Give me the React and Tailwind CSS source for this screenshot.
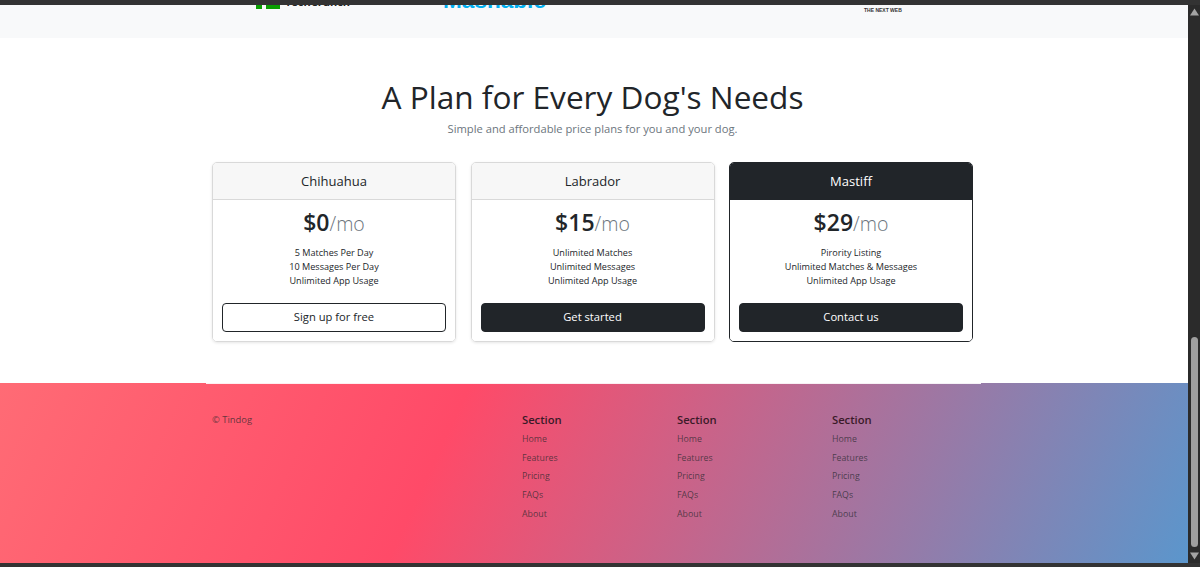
import React from 'react';

const plans = [
  { name: 'Chihuahua', price: '$0', lines: ['5 Matches Per Day', '10 Messages Per Day', 'Unlimited App Usage'], cta: 'Sign up for free', outline: true },
  { name: 'Labrador', price: '$15', lines: ['Unlimited Matches', 'Unlimited Messages', 'Unlimited App Usage'], cta: 'Get started' },
  { name: 'Mastiff', price: '$29', lines: ['Pirority Listing', 'Unlimited Matches & Messages', 'Unlimited App Usage'], cta: 'Contact us', dark: true },
];

const links = ['Home', 'Features', 'Pricing', 'FAQs', 'About'];

const PlanCard = ({ plan }) => (
  <div className={`w-[244px] h-[180px] flex flex-col rounded-[5px] overflow-hidden border ${plan.dark ? 'border-[#212529]' : 'border-[#d9d9d9] shadow-[0_1px_3px_rgba(0,0,0,0.1)]'}`}>
    <div className={`h-[37px] shrink-0 pt-[1px] flex items-center justify-center text-[13px] ${plan.dark ? 'bg-[#212529] text-white' : 'bg-[#f7f7f7] text-[#212529] border-b border-[#d9d9d9]'}`}>
      {plan.name}
    </div>
    <div className="flex-1 flex flex-col items-center px-[9px] bg-white">
      <div className="mt-[5px] h-[35px] flex items-baseline">
        <span className="text-[23px] font-semibold text-[#212529]">{plan.price}</span>
        <span className="text-[19.5px] font-light text-[#6c757d]">/mo</span>
      </div>
      <ul className="mt-[6px] text-center text-[9.1px] leading-[14px] text-[#212529]">
        {plan.lines.map(line => <li key={line}>{line}</li>)}
      </ul>
      <button className={`mt-[15px] w-full h-[29px] rounded-[4px] border border-[#212529] text-[11.2px] ${plan.outline ? 'bg-white text-[#212529]' : 'bg-[#212529] text-white'}`}>
        {plan.cta}
      </button>
    </div>
  </div>
);

const FooterCol = () => (
  <div>
    <h5 className="text-[11.2px] leading-[16px] font-semibold text-[#3a1a28]">Section</h5>
    <ul className="mt-[2px] text-[8.8px] text-[#212529]/70">
      {links.map(link => <li key={link} className="h-[18.7px] leading-[18px]">{link}</li>)}
    </ul>
  </div>
);

export default function App() {
  return (
    <div className="w-[1200px] h-[567px] overflow-hidden flex flex-col bg-[#333] font-['Open_Sans',sans-serif]">
      <div className="h-[5px] shrink-0 bg-[#333]" />
      <div className="flex-1 flex min-h-0">
        <main className="w-[1188px] flex flex-col bg-white">
          {/* Press logos, cut off by the scroll position */}
          <section className="h-[33px] shrink-0 bg-[#f8f9fa] overflow-hidden relative">
            <div className="absolute left-[256px] top-0 flex items-center gap-[4px]">
              <span className="w-[6px] h-[4px] bg-[#0a9e01]" />
              <span className="w-[14px] h-[4px] bg-[#0a9e01]" />
              <span className="ml-[1px] -mt-[10px] text-[11px] leading-[14px] font-bold text-[#222]">TechCrunch</span>
            </div>
            <div className="absolute left-[443px] -top-[17px] text-[22.6px] leading-[26px] font-bold text-[#00aeef] font-['Liberation_Sans',sans-serif]">Mashable</div>
            <div className="absolute left-[864px] top-[2px] text-[5px] leading-[6px] font-bold text-[#333] font-['Liberation_Sans',sans-serif]">THE NEXT WEB</div>
          </section>

          <section className="h-[345px] shrink-0 bg-white pt-[37px] flex flex-col">
            <div className="ml-[212px] w-[761px]">
              <h2 className="text-center text-[31.6px] leading-[44px] text-[#212529]">A Plan for Every Dog's Needs</h2>
              <p className="text-center text-[11.2px] leading-[16px] mt-[2px] text-[#6c757d]">Simple and affordable price plans for you and your dog.</p>
              <div className="mt-[25px] flex justify-between">
                {plans.map(plan => <PlanCard key={plan.name} plan={plan} />)}
              </div>
            </div>
          </section>

          <footer className="flex-1 bg-[linear-gradient(115deg,#ff6b75_0%,#ff4a68_37%,#5b96cc_100%)]">
            <div className="ml-[206px] w-[775px] h-px bg-white/90" />
            <div className="mt-[28px] ml-[212px] grid grid-cols-[310px_155px_155px_155px]">
              <small className="text-[9.4px] leading-[16px] text-[#212529]/70">© Tindog</small>
              <FooterCol />
              <FooterCol />
              <FooterCol />
            </div>
          </footer>
        </main>

        {/* Browser scrollbar */}
        <div className="w-[12px] shrink-0 bg-[#2b2b2b] flex flex-col items-center pt-[3px] pb-[3px] relative">
          <svg width="9" height="8" viewBox="0 0 9 8" className="shrink-0"><path d="M4.5 0.5 L9 7.5 H0 Z" fill="#a3a3a3" /></svg>
          <div className="mt-auto w-[7px] h-[210px] rounded-full bg-[#9f9f9f]" />
          <svg width="9" height="8" viewBox="0 0 9 8" className="shrink-0 mt-[5px]"><path d="M0 0.5 H9 L4.5 7.5 Z" fill="#a3a3a3" /></svg>
        </div>
      </div>
      <div className="h-[4px] shrink-0 bg-[#333]" />
    </div>
  );
}
